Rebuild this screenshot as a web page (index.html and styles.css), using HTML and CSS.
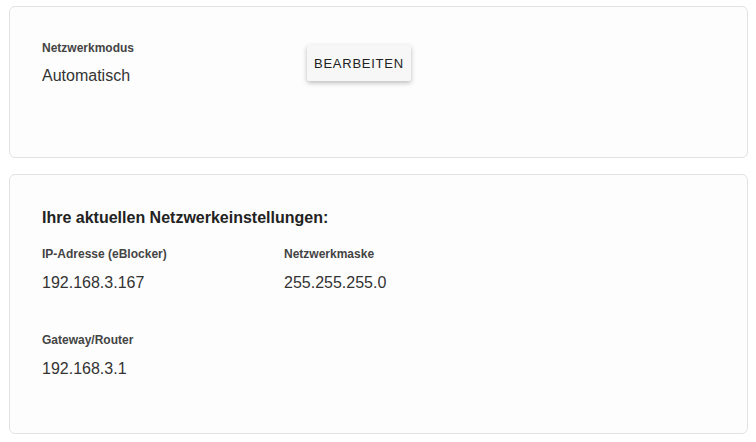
FILE: index.html
```html
<!DOCTYPE html>
<html lang="de">
<head>
<meta charset="utf-8">
<title>Netzwerk</title>
<link rel="stylesheet" href="styles.css">
</head>
<body>
<div class="page">
  <section class="card card-mode">
    <div class="mode-row">
      <div class="field">
        <div class="label">Netzwerkmodus</div>
        <div class="value">Automatisch</div>
      </div>
      <button class="btn" type="button">BEARBEITEN</button>
    </div>
  </section>
  <section class="card card-info">
    <h2 class="heading">Ihre aktuellen Netzwerkeinstellungen:</h2>
    <div class="grid">
      <div class="field">
        <div class="label">IP-Adresse (eBlocker)</div>
        <div class="value">192.168.3.167</div>
      </div>
      <div class="field">
        <div class="label">Netzwerkmaske</div>
        <div class="value">255.255.255.0</div>
      </div>
      <div class="field">
        <div class="label">Gateway/Router</div>
        <div class="value">192.168.3.1</div>
      </div>
    </div>
  </section>
</div>
</body>
</html>
```

FILE: styles.css
```css
html, body {
  margin: 0;
  padding: 0;
  background: #ffffff;
}
body {
  font-family: "Liberation Sans", Arial, Helvetica, sans-serif;
  color: #333333;
}
.page {
  padding: 6px 8px 0 9px;
  display: flex;
  flex-direction: column;
  gap: 16px;
}
.card {
  background: #fdfdfd;
  border: 1px solid #e2e2e2;
  border-radius: 6px;
  padding: 33px 32px;
}
.card-mode {
  padding-bottom: 71px;
}
.card-info {
  padding-bottom: 54px;
}
.mode-row {
  display: grid;
  grid-template-columns: 265px auto;
  align-items: start;
  justify-content: start;
}
.label {
  font-size: 12px;
  line-height: 16px;
  font-weight: bold;
  color: #444444;
  margin-bottom: 10px;
}
.card-info .label {
  margin-bottom: 11px;
}
.value {
  font-size: 16px;
  line-height: 20px;
  color: #333333;
}
.btn {
  margin-top: 5px;
  height: 36px;
  min-width: 88px;
  padding: 0 7px;
  border: none;
  border-radius: 2px;
  background: #f7f7f7;
  box-shadow: 0 2px 5px rgba(0, 0, 0, 0.26);
  font-family: "Liberation Sans", Arial, Helvetica, sans-serif;
  font-size: 13px;
  letter-spacing: 0.75px;
  color: #222222;
  cursor: pointer;
}
.heading {
  margin: 0 0 18px;
  font-size: 16px;
  line-height: 20px;
  font-weight: bold;
  color: #222222;
}
.grid {
  display: grid;
  grid-template-columns: 242px 242px;
  row-gap: 39px;
}
```
